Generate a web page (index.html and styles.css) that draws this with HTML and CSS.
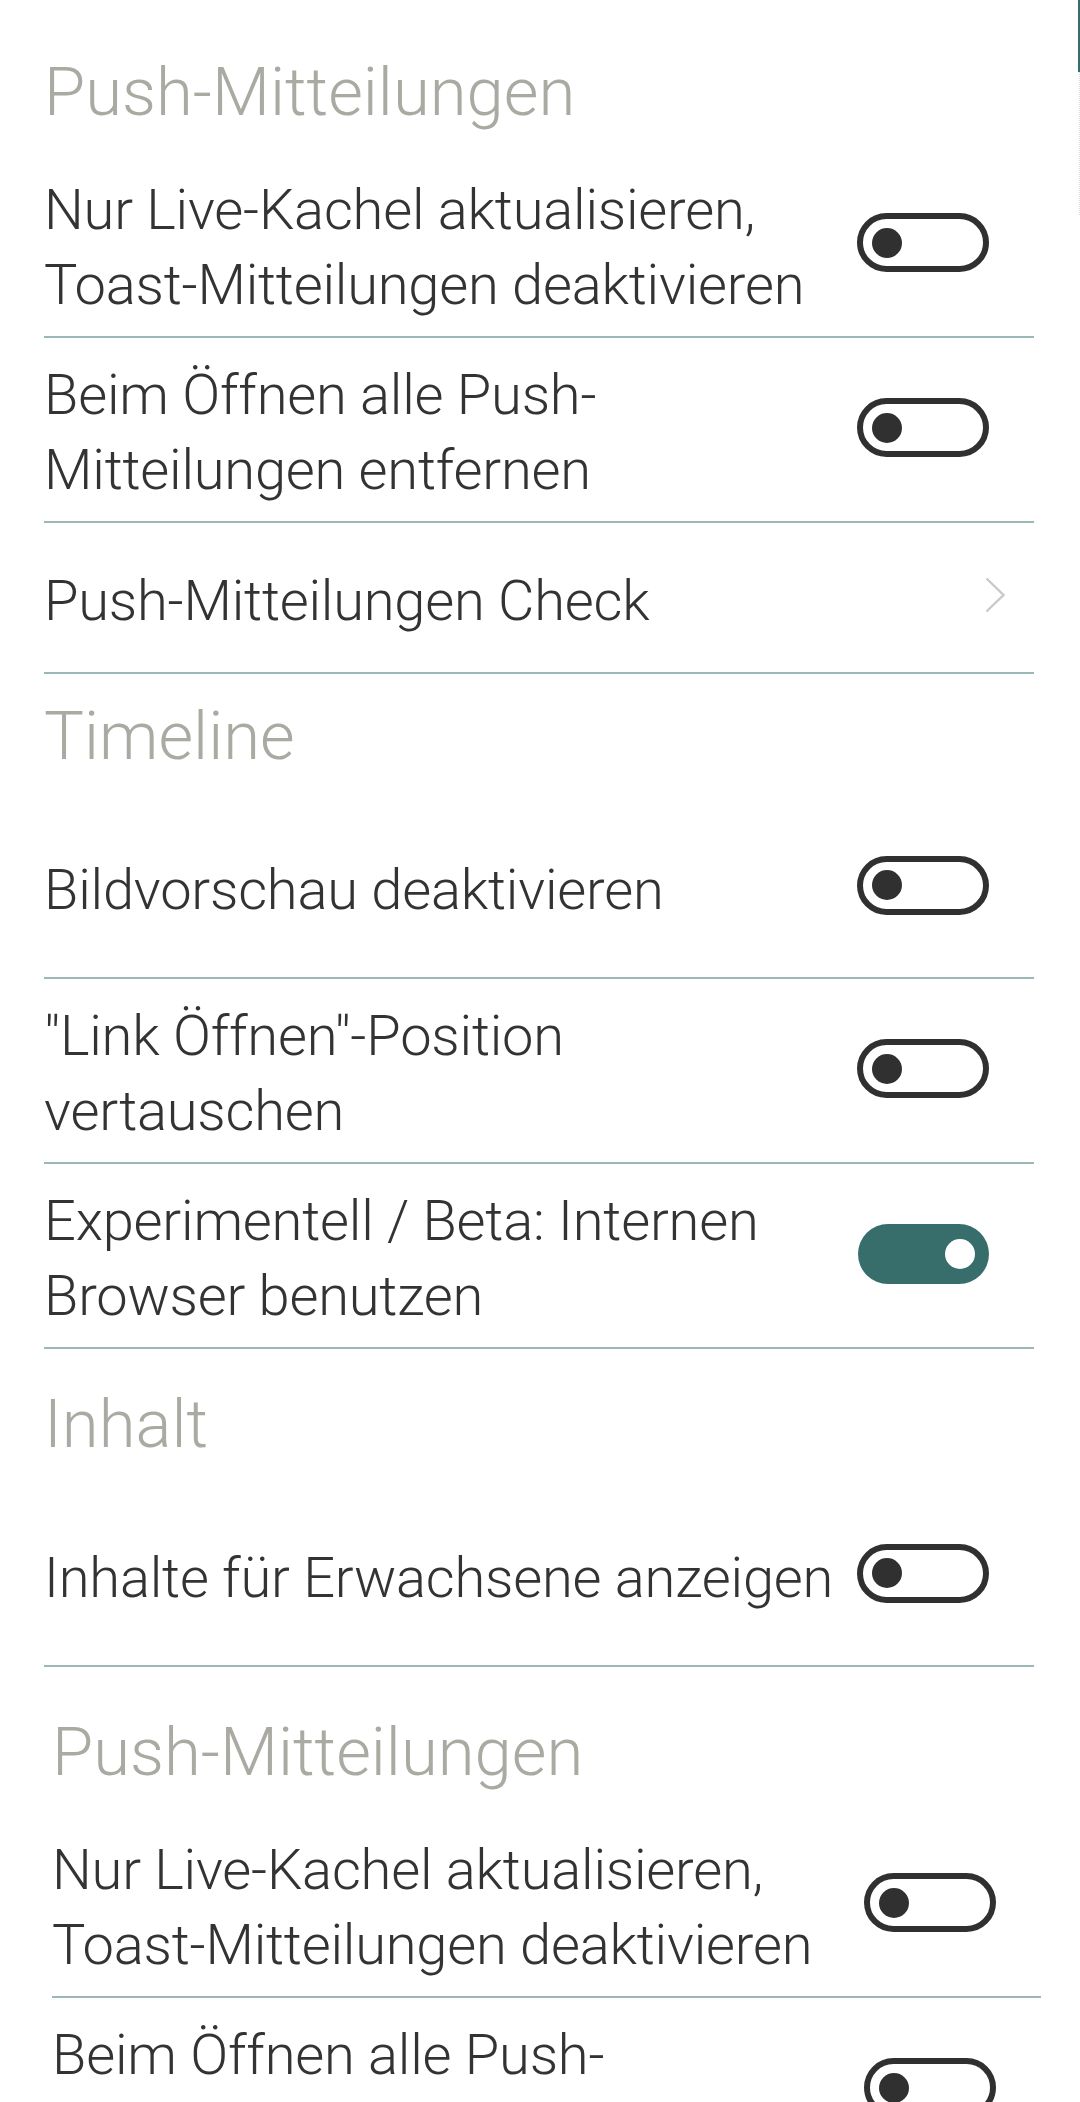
FILE: index.html
```html
<!DOCTYPE html>
<html lang="de">
<head>
<meta charset="utf-8">
<title>Einstellungen</title>
<link rel="stylesheet" href="styles.css">
</head>
<body>
<div class="page">
  <section class="group group-first">
    <h2 class="group-title">Push-Mitteilungen</h2>
    <div class="row">
      <span class="label">Nur Live-Kachel aktualisieren,<br>Toast-Mitteilungen deaktivieren</span>
      <span class="toggle"><span class="knob"></span></span>
    </div>
    <div class="row">
      <span class="label">Beim Öffnen alle Push-<br>Mitteilungen entfernen</span>
      <span class="toggle"><span class="knob"></span></span>
    </div>
    <div class="row row-link">
      <span class="label">Push-Mitteilungen Check</span>
      <svg class="chevron" width="20" height="36" viewBox="0 0 20 36"><polyline points="1.5,1.5 18.5,18 1.5,34.5" fill="none" stroke="#c9c9c9" stroke-width="2.4"/></svg>
    </div>
  </section>

  <section class="group">
    <h2 class="group-title">Timeline</h2>
    <div class="row">
      <span class="label">Bildvorschau deaktivieren</span>
      <span class="toggle"><span class="knob"></span></span>
    </div>
    <div class="row">
      <span class="label">"Link Öffnen"-Position<br>vertauschen</span>
      <span class="toggle"><span class="knob"></span></span>
    </div>
    <div class="row">
      <span class="label">Experimentell / Beta: Internen<br>Browser benutzen</span>
      <span class="toggle toggle-on"><span class="knob"></span></span>
    </div>
  </section>

  <section class="group group-content">
    <h2 class="group-title">Inhalt</h2>
    <div class="row">
      <span class="label">Inhalte für Erwachsene anzeigen</span>
      <span class="toggle"><span class="knob"></span></span>
    </div>
  </section>

  <section class="group group-shifted">
    <h2 class="group-title">Push-Mitteilungen</h2>
    <div class="row">
      <span class="label">Nur Live-Kachel aktualisieren,<br>Toast-Mitteilungen deaktivieren</span>
      <span class="toggle"><span class="knob"></span></span>
    </div>
    <div class="row">
      <span class="label">Beim Öffnen alle Push-<br>Mitteilungen entfernen</span>
      <span class="toggle"><span class="knob"></span></span>
    </div>
  </section>
</div>
<div class="scrollbar"><div class="scroll-thumb"></div><div class="scroll-track"></div></div>
</body>
</html>
```

FILE: styles.css
```css
* {
  box-sizing: border-box;
}

html, body {
  margin: 0;
  padding: 0;
  background: #ffffff;
}

body {
  width: 1080px;
  height: 2102px;
  overflow: hidden;
  font-family: Roboto, "Liberation Sans", sans-serif;
  color: #333333;
}

.page {
  padding: 0 46px 0 44px;
}

.group-first {
  padding-top: 30px;
}

.group-content {
  padding-top: 13px;
}

.group-shifted {
  padding-top: 23px;
  margin-left: 8px;
  margin-right: -7px;
}

.group-title {
  margin: 0;
  height: 123px;
  padding-top: 30px;
  font-size: 67px;
  line-height: 64px;
  font-weight: 300;
  color: #aaaaa2;
  letter-spacing: 0;
}

.row {
  display: flex;
  align-items: center;
  min-height: 182px;
  padding: 20px 0 13px;
  border-bottom: 2px solid #9bb7b7;
}

.row-link {
  min-height: 151px;
}

.label {
  flex: 1;
  font-size: 56px;
  line-height: 75px;
  font-weight: 300;
  letter-spacing: -0.2px;
  white-space: nowrap;
}

.toggle {
  flex: none;
  display: flex;
  align-items: center;
  width: 132px;
  height: 59px;
  margin: 0 45px 11px 0;
  padding-left: 9px;
  border: 6px solid #303030;
  border-radius: 30px;
}

.knob {
  width: 30px;
  height: 30px;
  border-radius: 50%;
  background: #303030;
}

.toggle-on {
  width: 131px;
  height: 60px;
  border: none;
  background: #376e6c;
  justify-content: flex-end;
  padding: 0 14px 0 0;
}

.toggle-on .knob {
  background: #ffffff;
}

.chevron {
  flex: none;
  margin: 0 29px 12px 0;
}

.scrollbar {
  position: absolute;
  top: 0;
  right: 0;
  width: 2px;
}

.scroll-thumb {
  height: 72px;
  background: #376e6c;
}

.scroll-track {
  height: 143px;
  border-right: 1px dotted #dcdcdc;
}
```
